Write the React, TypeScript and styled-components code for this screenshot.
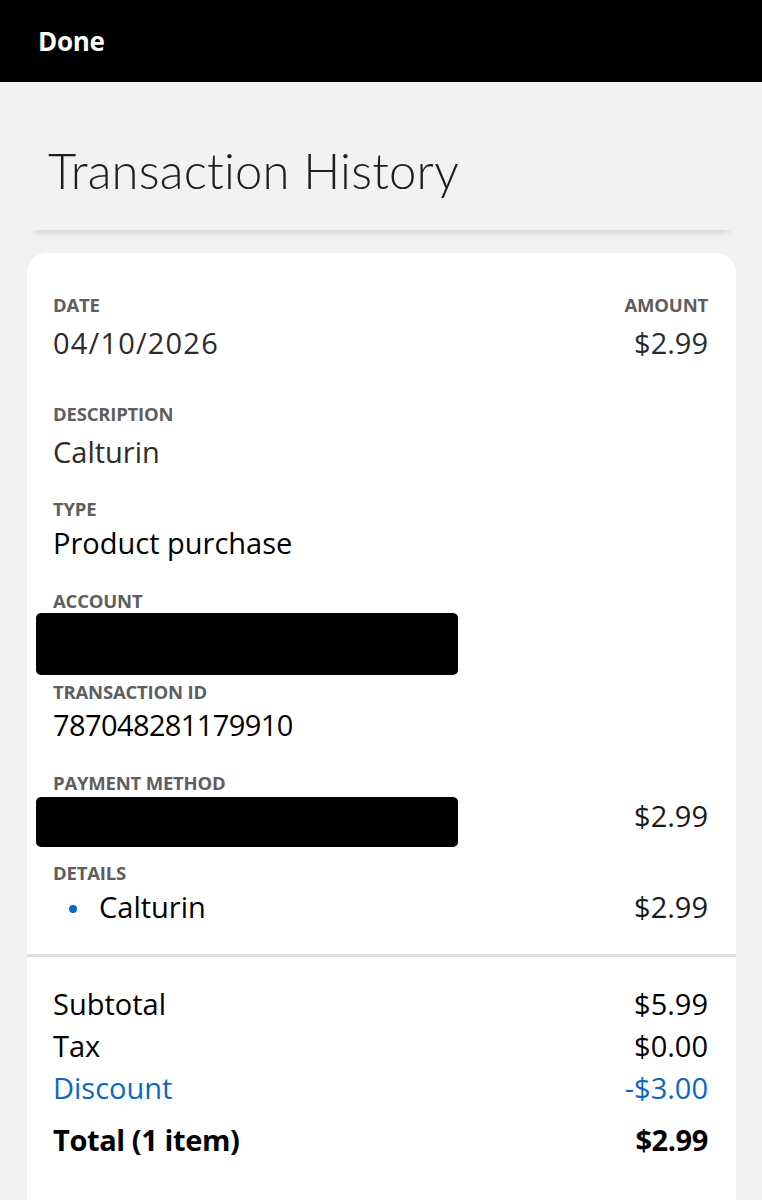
import React from "react";
import styled, { createGlobalStyle } from "styled-components";

const Global = createGlobalStyle`
  html, body { margin: 0; padding: 0; background: #f2f2f2; }
  body { font-family: "Open Sans", "Noto Sans", "Liberation Sans", sans-serif; -webkit-font-smoothing: antialiased; }
  * { box-sizing: border-box; }
`;

const Page = styled.div`
  width: 762px;
  min-height: 1200px;
  background: #f2f2f2;
  overflow: hidden;
`;

const TopBar = styled.div`
  height: 82px;
  background: #000;
  display: flex;
  align-items: center;
  padding: 0 0 0 38px;
`;

const DoneButton = styled.span`
  color: #fff;
  font-size: 26px;
  font-weight: 700;
  letter-spacing: -0.3px;
`;

const Header = styled.div`
  margin: 0 30px;
  height: 148px;
  padding: 58px 0 0 18px;
  background: #f2f2f2;
  box-shadow: 0 7px 6px -4px rgba(0, 0, 0, 0.12);
`;

const Title = styled.h1`
  margin: 0;
  font-family: Lato, "Open Sans", sans-serif;
  font-size: 49px;
  line-height: 60px;
  font-weight: 300;
  color: #1e1e1e;
  letter-spacing: 0.2px;
`;

const Card = styled.div`
  margin: 23px 26px 0 27px;
  background: #fff;
  border-radius: 20px 20px 0 0;
  min-height: 960px;
`;

const Details = styled.div`
  padding: 41px 28px 27px 26px;
  display: flex;
  flex-direction: column;
`;

const Row = styled.div<{ $gap?: number }>`
  display: flex;
  justify-content: space-between;
  align-items: flex-end;
  margin-bottom: ${(p) => p.$gap ?? 0}px;
`;

const Field = styled.div<{ $align?: "left" | "right" }>`
  display: flex;
  flex-direction: column;
  align-items: ${(p) => (p.$align === "right" ? "flex-end" : "flex-start")};
`;

const Label = styled.div`
  font-size: 18.5px;
  line-height: 22px;
  font-weight: 700;
  color: #5e5e5e;
  text-transform: uppercase;
  letter-spacing: -0.2px;
`;

const Value = styled.div<{ $dark?: boolean; $top?: number; $spacing?: number }>`
  font-size: 29px;
  line-height: 40px;
  margin-top: ${(p) => p.$top ?? 7}px;
  color: ${(p) => (p.$dark ? "#000" : "#2b2b2b")};
  letter-spacing: ${(p) => p.$spacing ?? 0}px;
`;

const Redacted = styled.div<{ $h: number; $top: number }>`
  width: 422px;
  height: ${(p) => p.$h}px;
  background: #000;
  border-radius: 5px;
  margin-left: -17px;
  margin-top: ${(p) => p.$top}px;
`;

const Amount = styled.div<{ $lift?: number }>`
  font-size: 29px;
  line-height: 40px;
  color: #1a1a1a;
  margin-bottom: ${(p) => p.$lift ?? 0}px;
`;

const BulletItem = styled.div`
  display: flex;
  align-items: center;
  font-size: 29px;
  line-height: 40px;
  color: #000;
  margin-top: 3px;
  padding-left: 16px;

  &::before {
    content: "";
    width: 8px;
    height: 8px;
    border-radius: 50%;
    background: #0a68c4;
    margin: 4px 22px 0 0;
  }
`;

const Divider = styled.div`
  height: 3px;
  background: #dedede;
`;

const Summary = styled.div`
  padding: 26px 28px 0 26px;
  display: flex;
  flex-direction: column;
`;

const SumRow = styled.div<{ $tone?: "blue" | "total" }>`
  display: flex;
  justify-content: space-between;
  font-size: 29px;
  line-height: 42px;
  color: ${(p) => (p.$tone === "blue" ? "#0a68c4" : "#000")};
  font-weight: ${(p) => (p.$tone === "total" ? 700 : 400)};
  letter-spacing: ${(p) => (p.$tone === "total" ? "-0.4px" : "0")};
  margin-top: ${(p) => (p.$tone === "total" ? 10 : 0)}px;
`;

export default function App() {
  return (
    <Page>
      <Global />
      <TopBar>
        <DoneButton>Done</DoneButton>
      </TopBar>
      <Header>
        <Title>Transaction History</Title>
      </Header>
      <Card>
        <Details>
          <Row $gap={40}>
            <Field>
              <Label>Date</Label>
              <Value $spacing={1.2}>04/10/2026</Value>
            </Field>
            <Field $align="right">
              <Label>Amount</Label>
              <Value>$2.99</Value>
            </Field>
          </Row>
          <Row $gap={26}>
            <Field>
              <Label>Description</Label>
              <Value>Calturin</Value>
            </Field>
          </Row>
          <Row $gap={27}>
            <Field>
              <Label>Type</Label>
              <Value $dark $top={3}>Product purchase</Value>
            </Field>
          </Row>
          <Row $gap={6}>
            <Field>
              <Label>Account</Label>
              <Redacted $h={62} $top={1} />
            </Field>
          </Row>
          <Row $gap={27}>
            <Field>
              <Label>Transaction ID</Label>
              <Value $dark $top={2} $spacing={-0.6}>787048281179910</Value>
            </Field>
          </Row>
          <Row $gap={15}>
            <Field>
              <Label>Payment Method</Label>
              <Redacted $h={50} $top={3} />
            </Field>
            <Amount $lift={11}>$2.99</Amount>
          </Row>
          <Row>
            <Field>
              <Label>Details</Label>
              <BulletItem>Calturin</BulletItem>
            </Field>
            <Amount>$2.99</Amount>
          </Row>
        </Details>
        <Divider />
        <Summary>
          <SumRow>
            <span>Subtotal</span>
            <span>$5.99</span>
          </SumRow>
          <SumRow>
            <span>Tax</span>
            <span>$0.00</span>
          </SumRow>
          <SumRow $tone="blue">
            <span>Discount</span>
            <span>-$3.00</span>
          </SumRow>
          <SumRow $tone="total">
            <span>Total (1 item)</span>
            <span>$2.99</span>
          </SumRow>
        </Summary>
      </Card>
    </Page>
  );
}
